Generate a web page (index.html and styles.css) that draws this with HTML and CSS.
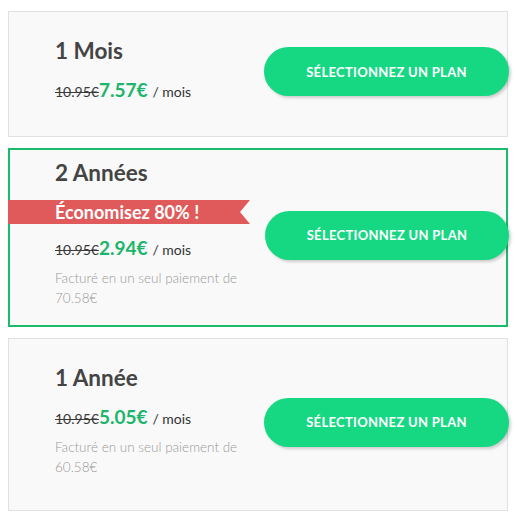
FILE: index.html
```html
<!DOCTYPE html>
<html lang="fr">
<head>
<meta charset="utf-8">
<link rel="stylesheet" href="styles.css">
</head>
<body>
<div class="plans">
  <div class="card">
    <div class="info">
      <div class="title">1 Mois</div>
      <div class="price"><span class="old">10.95€</span><span class="new">7.57€</span> <span class="per">/ mois</span></div>
    </div>
    <button class="select">Sélectionnez un plan</button>
  </div>
  <div class="card featured">
    <div class="info">
      <div class="title">2 Années</div>
      <div class="ribbon">Économisez 80% !</div>
      <div class="price"><span class="old">10.95€</span><span class="new">2.94€</span> <span class="per">/ mois</span></div>
      <div class="billed">Facturé en un seul paiement de 70.58€</div>
    </div>
    <button class="select">Sélectionnez un plan</button>
  </div>
  <div class="card">
    <div class="info">
      <div class="title">1 Année</div>
      <div class="price"><span class="old">10.95€</span><span class="new">5.05€</span> <span class="per">/ mois</span></div>
      <div class="billed">Facturé en un seul paiement de 60.58€</div>
    </div>
    <button class="select">Sélectionnez un plan</button>
  </div>
</div>
</body>
</html>
```
FILE: styles.css
```css
html, body {
  margin: 0;
  padding: 0;
  background: #ffffff;
  font-family: Lato, "Open Sans", sans-serif;
}

.plans {
  width: 500px;
  padding: 11px 0 0 8px;
  display: flex;
  flex-direction: column;
  gap: 11px;
}

.card {
  display: flex;
  align-items: center;
  justify-content: space-between;
  background: #f9f9f9;
  border: 1px solid #e1e1e1;
  padding: 25px 0 33px 46px;
}

.card.featured {
  border: 2px solid #1cba6b;
  padding: 9px 0 17px 45px;
}

.info {
  width: 195px;
  display: flex;
  flex-direction: column;
}

.title {
  font-size: 22.5px;
  line-height: 28px;
  font-weight: 700;
  color: #444444;
}

.ribbon {
  margin: 13px 0 0 -47px;
  padding-left: 47px;
  width: 195px;
  height: 24px;
  line-height: 24px;
  background: #e05a5b;
  color: #ffffff;
  font-size: 18px;
  font-weight: 700;
  clip-path: polygon(0 0, 100% 0, calc(100% - 10px) 50%, 100% 100%, 0 100%);
}

.price {
  margin-top: 12px;
  font-size: 19px;
  line-height: 26px;
  white-space: nowrap;
}

.ribbon + .price {
  margin-top: 11px;
}

.price span {
  line-height: 1;
}

.old {
  font-size: 14px;
  color: #3a3a3a;
  text-decoration: line-through;
}

.new {
  font-weight: 700;
  color: #1bb56b;
}

.per {
  font-size: 14px;
  color: #333333;
}

.billed {
  margin-top: 7px;
  font-size: 13.5px;
  line-height: 20px;
  font-weight: 300;
  color: #999999;
}

.select {
  width: 245px;
  height: 49px;
  margin: 3px -2px 0 0;
  padding: 0;
  border: none;
  border-radius: 25px;
  background: #16d883;
  color: #ffffff;
  font-family: Lato, "Open Sans", sans-serif;
  font-size: 13px;
  font-weight: 700;
  letter-spacing: 0.3px;
  text-transform: uppercase;
  box-shadow: 2px 2px 3px rgba(0, 0, 0, 0.18);
  cursor: pointer;
}

.featured .select {
  width: 244px;
  margin-right: -3px;
}
```
